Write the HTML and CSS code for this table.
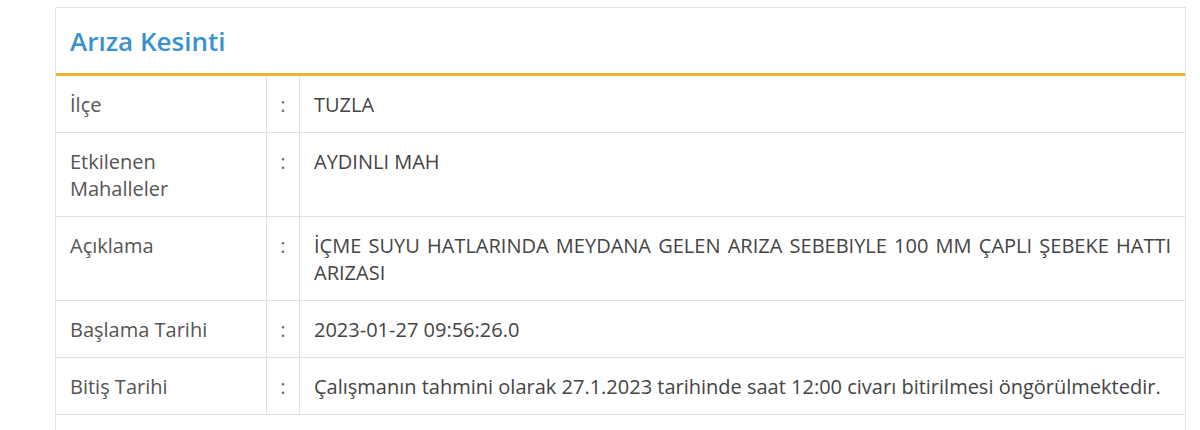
FILE: index.html
```html
<!DOCTYPE html>
<html lang="tr">
<head>
<meta charset="UTF-8">
<title>Arıza Kesinti</title>
<link rel="stylesheet" href="styles.css">
</head>
<body>

<div class="panel">
    <div class="panel-heading">
        <h3>Arıza Kesinti</h3>
    </div>
    <table class="detail-table">
        <tr>
            <td class="label">İlçe</td>
            <td class="sep">:</td>
            <td class="value">TUZLA</td>
        </tr>
        <tr>
            <td class="label">Etkilenen<br>Mahalleler</td>
            <td class="sep">:</td>
            <td class="value">AYDINLI MAH</td>
        </tr>
        <tr>
            <td class="label">Açıklama</td>
            <td class="sep">:</td>
            <td class="value">İÇME SUYU HATLARINDA MEYDANA GELEN ARIZA SEBEBIYLE 100 MM ÇAPLI ŞEBEKE HATTI ARIZASI</td>
        </tr>
        <tr>
            <td class="label">Başlama Tarihi</td>
            <td class="sep">:</td>
            <td class="value">2023-01-27 09:56:26.0</td>
        </tr>
        <tr>
            <td class="label">Bitiş Tarihi</td>
            <td class="sep">:</td>
            <td class="value">Çalışmanın tahmini olarak 27.1.2023 tarihinde saat 12:00 civarı bitirilmesi öngörülmektedir.</td>
        </tr>
        <tr class="empty">
            <td colspan="3"></td>
        </tr>
    </table>
</div>

</body>
</html>
```

FILE: styles.css
```css
body {
    font-family: "Open Sans", Arial, sans-serif;
    margin: 0;
    padding: 0;
    background-color: #fff;
    overflow: hidden;
}
.panel {
    margin: 7px 0 0 55px;
    width: 1131px;
    border: 1px solid #e3e3e3;
    border-bottom: none;
    box-sizing: border-box;
}
.panel-heading {
    height: 65px;
    padding: 0 14px;
    display: flex;
    align-items: center;
    border-bottom: 3px solid #ebb334;
}
.panel-heading h3 {
    margin: 0;
    font-size: 26px;
    font-weight: 600;
    color: #3a92cd;
}
.detail-table {
    width: 100%;
    border-collapse: collapse;
    font-size: 20px;
    line-height: 27px;
}
.detail-table td {
    border-bottom: 1px solid #e0e0e0;
    padding: 15px 14px 14px;
    vertical-align: top;
}
.detail-table .label {
    width: 182px;
    color: #555;
    border-right: 1px solid #e0e0e0;
}
.detail-table .sep {
    width: 32px;
    padding: 15px 0 14px;
    text-align: center;
    color: #666;
    border-right: 1px solid #e0e0e0;
}
.detail-table .value {
    color: #444;
    text-align: justify;
}
.detail-table .empty td {
    height: 10px;
    border-bottom: none;
}
```
